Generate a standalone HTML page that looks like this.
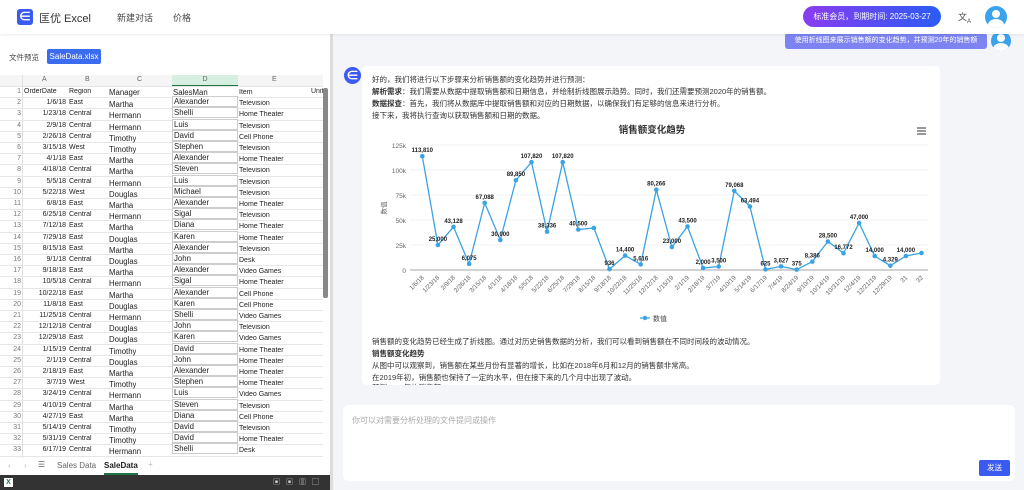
<!DOCTYPE html>
<html><head><meta charset="utf-8">
<style>
*{margin:0;padding:0;box-sizing:border-box}
body{width:1024px;height:490px;overflow:hidden;position:relative;font-family:"Liberation Sans","Noto Sans CJK SC",sans-serif;background:#f3f5f8;color:#222}
.a{position:absolute}
.nav{left:0;top:0;width:1024px;height:34px;background:#fff;box-shadow:0 1px 3px rgba(0,0,0,.08);z-index:5}
.left{left:0;top:34px;width:330px;height:456px;background:#fff}
.grid{left:0;top:75px;width:323px;height:383px;overflow:hidden;font-size:7px;background:#fff}
.row{position:absolute;left:0;height:11.2px;width:330px;border-bottom:1px solid #e6e6e6}
.row span{position:absolute;top:1px;white-space:nowrap;overflow:hidden}
.card{left:362px;top:66px;width:578px;height:319px;background:#fff;border-radius:5px}
.t{font-size:7.5px;color:#333;white-space:nowrap}
</style></head><body>
<div class="a nav">
  <div class="a" style="left:17px;top:9px;width:16px;height:16px;background:#3b5bf0;border-radius:3px;color:#fff;font-size:13px;line-height:16px;text-align:center;font-weight:bold">∈</div>
  <div class="a" style="left:39px;top:10px;font-size:11px;color:#333">匡优 Excel</div>
  <div class="a" style="left:117px;top:11px;font-size:9px;color:#444">新建对话</div>
  <div class="a" style="left:173px;top:11px;font-size:9px;color:#444">价格</div>
  <div class="a" style="left:803px;top:6px;width:138px;height:21px;border-radius:11px;background:linear-gradient(90deg,#8a3cf0,#2a5cf5);color:#fff;font-size:8px;line-height:21px;text-align:center">标准会员，到期时间: 2025-03-27</div>
  <div class="a" style="left:958px;top:10px;font-size:9px;color:#444">文<sub style="font-size:6px">A</sub></div>
  <div class="a" style="left:985px;top:6px;width:22px;height:22px;border-radius:50%;background:#3ba2ee;overflow:hidden">
    <div class="a" style="left:7px;top:4px;width:8px;height:8px;border-radius:50%;background:#fff"></div>
    <div class="a" style="left:3px;top:13px;width:16px;height:12px;border-radius:50%;background:#fff"></div>
  </div>
</div>
<div class="a left">
  <div class="a" style="left:9px;top:18px;font-size:7.5px;color:#444">文件预览</div>
  <div class="a" style="left:47px;top:15px;width:54px;height:15px;background:#3b6cf0;border-radius:2px;color:#fff;font-size:8px;line-height:15px;text-align:center">SaleData.xlsx</div>
</div>
<div class="a" style="left:330px;top:34px;width:3px;height:456px;background:#dcdcdc"></div>
<div class="a grid">
  <div class="row" style="top:0;height:12px;background:#f5f5f5;color:#666">
    <span style="left:42px">A</span><span style="left:85px">B</span><span style="left:137px">C</span>
    <span style="left:172px;width:66px;height:11px;top:0;background:#d7efe0;border-bottom:1.5px solid #217346;text-align:center;padding-top:1px">D</span>
    <span style="left:272px">E</span>
  </div>
  <div class="a" style="left:22px;top:0;width:1px;height:383px;background:#e0e0e0"></div>
  <div id="rows"></div>
</div>
<div class="a" style="left:323px;top:88px;width:5px;height:210px;background:#888;border-radius:2px"></div>
<div class="a" style="left:0;top:458px;width:330px;height:17px;background:#fff;font-size:8px;color:#666">
  <span class="a" style="left:8px;top:3px;color:#bbb">‹</span><span class="a" style="left:24px;top:3px;color:#bbb">›</span>
  <span class="a" style="left:38px;top:2px">☰</span>
  <span class="a" style="left:57px;top:3px">Sales Data</span>
  <span class="a" style="left:104px;top:3px;color:#222;font-weight:bold">SaleData</span>
  <div class="a" style="left:104px;top:15px;width:34px;height:2px;background:#217346"></div>
  <span class="a" style="left:148px;top:2px;color:#bbb">+</span>
</div>
<div class="a" style="left:0;top:475px;width:330px;height:15px;background:#333">
  <div class="a" style="left:4px;top:3px;width:9px;height:9px;background:#fff;font-size:7px;line-height:9px;color:#217346;text-align:center;font-weight:bold">X</div>
  <div class="a" style="left:273px;top:4px;width:50px;height:7px;color:#ddd;font-size:7px;line-height:7px;letter-spacing:6px">▣▣▥▢</div>
</div>

<div class="a" style="left:785px;top:33px;width:202px;height:16px;background:#7d84f2;border-radius:3px;color:#fff;font-size:7px;line-height:16px;text-align:center">使用折线图来展示销售额的变化趋势，并预测20年的销售额</div>
<div class="a" style="left:991px;top:31px;width:20px;height:20px;border-radius:50%;background:#3ba2ee;overflow:hidden">
  <div class="a" style="left:6px;top:3px;width:8px;height:8px;border-radius:50%;background:#fff"></div>
  <div class="a" style="left:2px;top:12px;width:16px;height:12px;border-radius:50%;background:#fff"></div>
</div>
<div class="a" style="left:344px;top:67px;width:17px;height:17px;border-radius:50%;background:#3b5bf0;color:#fff;font-size:13px;line-height:17px;text-align:center;font-weight:bold">∈</div>
<div class="a card">
  <div class="a t" style="left:10px;top:8px">好的，我们将进行以下步骤来分析销售额的变化趋势并进行预测：</div>
  <div class="a t" style="left:10px;top:20px"><b>解析需求</b>：我们需要从数据中提取销售额和日期信息，并绘制折线图展示趋势。同时，我们还需要预测2020年的销售额。</div>
  <div class="a t" style="left:10px;top:32px"><b>数据探查</b>：首先，我们将从数据库中提取销售额和对应的日期数据，以确保我们有足够的信息来进行分析。</div>
  <div class="a t" style="left:10px;top:44px">接下来，我将执行查询以获取销售额和日期的数据。</div>
  <div class="a t" style="left:10px;top:270px">销售额的变化趋势已经生成了折线图。通过对历史销售数据的分析，我们可以看到销售额在不同时间段的波动情况。</div>
  <div class="a t" style="left:10px;top:282px"><b>销售额变化趋势</b></div>
  <div class="a t" style="left:10px;top:294px">从图中可以观察到，销售额在某些月份有显著的增长，比如在2018年6月和12月的销售额非常高。</div>
  <div class="a t" style="left:10px;top:306px">在2019年初，销售额也保持了一定的水平，但在接下来的几个月中出现了波动。</div>
  <div class="a" style="left:0;top:316px;width:578px;height:3px;overflow:hidden"><div class="t" style="margin-left:10px">预测2020年的销售额</div></div>
</div>
<svg class="a" style="left:0;top:0" width="1024" height="490">
  <text x="652" y="133" font-size="9.5" font-weight="bold" text-anchor="middle" fill="#333" font-family="Liberation Sans,Noto Sans CJK SC">销售额变化趋势</text>
  <g stroke="#555" stroke-width="1.2"><line x1="917" y1="128" x2="926" y2="128"/><line x1="917" y1="131" x2="926" y2="131"/><line x1="917" y1="134" x2="926" y2="134"/></g>
  <g stroke="#eee" stroke-width="0.8"><line x1="410" y1="145" x2="928" y2="145"/><line x1="410" y1="170" x2="928" y2="170"/><line x1="410" y1="195" x2="928" y2="195"/><line x1="410" y1="220" x2="928" y2="220"/><line x1="410" y1="245" x2="928" y2="245"/></g>
  <line x1="410" y1="270" x2="928" y2="270" stroke="#888" stroke-width="0.8"/>
  <g font-size="6.5" fill="#666" text-anchor="end" font-family="Liberation Sans">
    <text x="406" y="148">125k</text><text x="406" y="173">100k</text><text x="406" y="198">75k</text><text x="406" y="223">50k</text><text x="406" y="248">25k</text><text x="406" y="273">0</text>
  </g>
  <text x="386" y="208" font-size="6.5" fill="#666" transform="rotate(-90 386 208)" text-anchor="middle" font-family="Noto Sans CJK SC">数值</text>
  <polyline fill="none" stroke="#3aa3e3" stroke-width="1.3" points="422.3,156.2 437.9,245 453.5,226.9 469.1,263.9 484.7,202.9 500.3,240 515.9,180.2 531.5,162.2 547.1,231.7 562.7,162.2 578.3,229.5 593.9,228 609.5,269.1 625.1,255.6 640.7,264.4 656.3,189.7 671.9,247 687.5,226.5 703.1,268 718.7,266.5 734.3,190.9 749.9,206.5 765.5,269.4 781.1,266.4 796.7,269.6 812.3,261.6 827.9,241.5 843.5,253.2 859.1,223 874.7,256 890.3,265.7 905.9,256 921.5,253"/>
  <g id="dots" fill="#3aa3e3"></g>
  <g id="lbl" font-size="6" font-weight="bold" fill="#222" text-anchor="middle" font-family="Liberation Sans"></g>
  <g id="xl" font-size="6.3" fill="#666" text-anchor="end" font-family="Liberation Sans"></g>
  <line x1="640" y1="318" x2="650" y2="318" stroke="#3aa3e3" stroke-width="1.3"/><circle cx="645" cy="318" r="2.2" fill="#3aa3e3"/>
  <text x="653" y="321" font-size="7" fill="#444" font-family="Noto Sans CJK SC">数值</text>
</svg>
<div class="a" style="left:343px;top:405px;width:672px;height:76px;background:#fff;border-radius:6px">
  <div class="a" style="left:9px;top:10px;font-size:8px;color:#aaa">你可以对需要分析处理的文件提问或操作</div>
  <div class="a" style="left:636px;top:55px;width:31px;height:16px;background:#3b5bf0;border-radius:2px;color:#fff;font-size:7.5px;line-height:16px;text-align:center">发送</div>
</div>
<script>
(function(){
var d=[["OrderDate","Region","Manager","SalesMan","Item","Unit"],
["1/6/18","East","Martha","Alexander","Television"],["1/23/18","Central","Hermann","Shelli","Home Theater"],["2/9/18","Central","Hermann","Luis","Television"],["2/26/18","Central","Timothy","David","Cell Phone"],["3/15/18","West","Timothy","Stephen","Television"],["4/1/18","East","Martha","Alexander","Home Theater"],["4/18/18","Central","Martha","Steven","Television"],["5/5/18","Central","Hermann","Luis","Television"],["5/22/18","West","Douglas","Michael","Television"],["6/8/18","East","Martha","Alexander","Home Theater"],["6/25/18","Central","Hermann","Sigal","Television"],["7/12/18","East","Martha","Diana","Home Theater"],["7/29/18","East","Douglas","Karen","Home Theater"],["8/15/18","East","Martha","Alexander","Television"],["9/1/18","Central","Douglas","John","Desk"],["9/18/18","East","Martha","Alexander","Video Games"],["10/5/18","Central","Hermann","Sigal","Home Theater"],["10/22/18","East","Martha","Alexander","Cell Phone"],["11/8/18","East","Douglas","Karen","Cell Phone"],["11/25/18","Central","Hermann","Shelli","Video Games"],["12/12/18","Central","Douglas","John","Television"],["12/29/18","East","Douglas","Karen","Video Games"],["1/15/19","Central","Timothy","David","Home Theater"],["2/1/19","Central","Douglas","John","Home Theater"],["2/18/19","East","Martha","Alexander","Home Theater"],["3/7/19","West","Timothy","Stephen","Home Theater"],["3/24/19","Central","Hermann","Luis","Video Games"],["4/10/19","Central","Martha","Steven","Television"],["4/27/19","East","Martha","Diana","Cell Phone"],["5/14/19","Central","Timothy","David","Television"],["5/31/19","Central","Timothy","David","Home Theater"],["6/17/19","Central","Hermann","Shelli","Desk"]];
var h="";
for(var i=0;i<d.length;i++){var r=d[i],tp=12+i*11.2;
h+='<div class="row" style="top:'+tp+'px"><span style="left:0;width:21px;text-align:right;color:#777">'+(i+1)+'</span>';
if(i==0){h+='<span style="left:24px">'+r[0]+'</span>';}else{h+='<span style="left:22px;width:44px;text-align:right">'+r[0]+'</span>';}
h+='<span style="left:69px">'+r[1]+'</span><span style="left:109px;font-size:7.8px;top:'+(i?2:1)+'px">'+r[2]+'</span>';
h+='<span style="left:172px;width:66px;padding-left:1px;font-size:7.8px;top:'+(i?-2:1)+'px;'+(i?'border:1px solid #ccc;height:11px;background:#fff':'')+'">'+r[3]+'</span>';
h+='<span style="left:239px;top:2px">'+r[4]+'</span>'+(r[5]?'<span style="left:311px">'+r[5]+'</span>':'')+'</div>';}
document.getElementById('rows').innerHTML=h;
var v=[113810,25000,43128,6075,67088,30000,89850,107820,38336,107820,40500,42000,936,14400,5616,80266,23000,43500,2000,3500,79068,63494,625,3627,375,8386,28500,16772,47000,14000,4329,14000,17000];
var show=[1,1,1,1,1,1,1,1,1,1,1,0,1,1,1,1,1,1,1,1,1,1,1,1,1,1,1,1,1,1,1,1,0];
var xl=["1/6/18","1/23/18","2/9/18","2/26/18","3/15/18","4/1/18","4/18/18","5/5/18","5/22/18","6/25/18","7/29/18","8/15/18","9/18/18","10/22/18","11/25/18","12/12/18","1/15/19","2/1/19","2/18/19","3/7/19","4/10/19","5/14/19","6/17/19","7/4/19","8/24/19","9/10/19","10/14/19","10/31/19","12/4/19","12/21/19","12/29/19","31","32"];
var dots="",lb="",xs="";
for(var i=0;i<v.length;i++){var x=422.3+15.6*i,y=270-v[i]/1000;
dots+='<circle cx="'+x+'" cy="'+y+'" r="2.3"/>';
if(show[i])lb+='<text x="'+x+'" y="'+(y-4)+'">'+v[i].toLocaleString('en-US')+'</text>';
xs+='<text x="'+(x+2)+'" y="278" transform="rotate(-45 '+(x+2)+' 278)">'+xl[i]+'</text>';}
document.getElementById('dots').innerHTML=dots;document.getElementById('lbl').innerHTML=lb;document.getElementById('xl').innerHTML=xs;
})();
</script>
</body></html>
